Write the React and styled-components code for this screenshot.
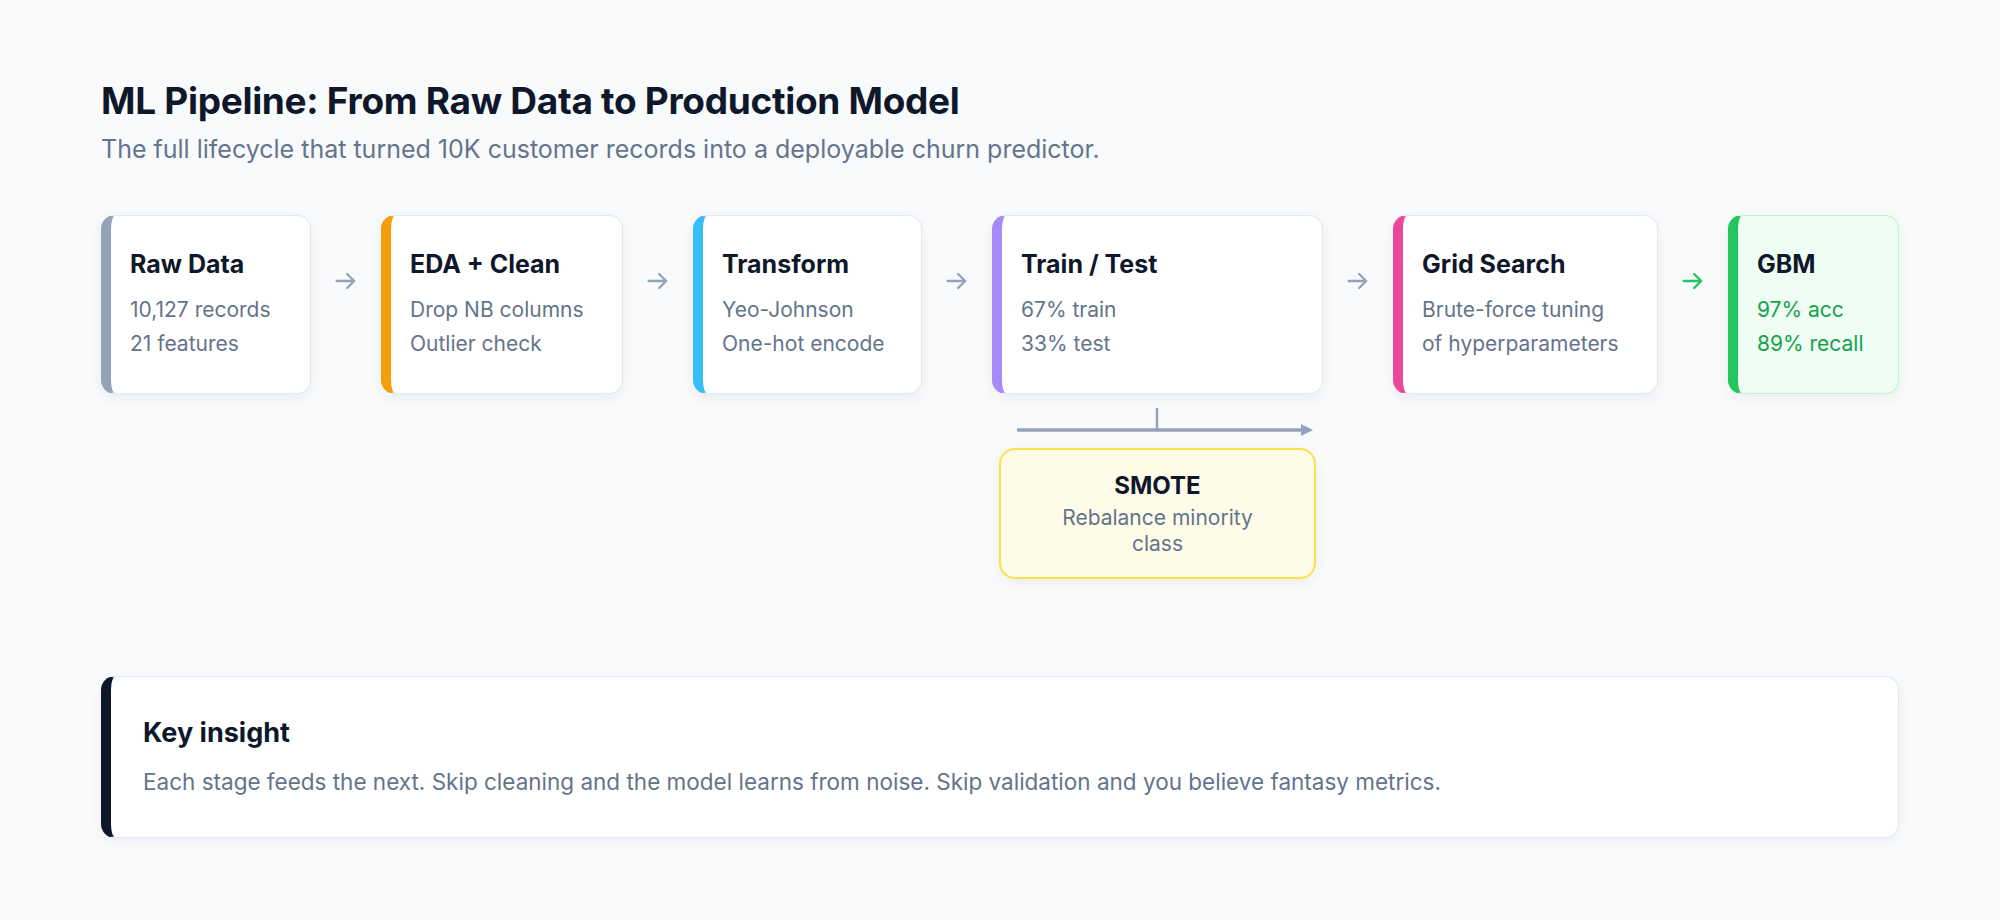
import React from "react";
import styled, { createGlobalStyle } from "styled-components";

const Global = createGlobalStyle`
  html, body { margin: 0; background: #f8fafc; }
  body { font-family: Inter, "Noto Sans", sans-serif; color: #0f172a; }
`;

const Page = styled.div`
  padding: 78px 101px 60px;
  box-sizing: border-box;
  width: 2000px;
`;
const Title = styled.h1`
  margin: 0;
  font-size: 37px;
  line-height: 46px;
  font-weight: 700;
  color: #0f172a;
  letter-spacing: -0.3px;
`;
const Subtitle = styled.p`
  margin: 8px 0 0;
  font-size: 25px;
  line-height: 34px;
  color: #64748b;
`;
const Flow = styled.div`
  display: flex;
  align-items: flex-start;
  margin-top: 49px;
`;
const Column = styled.div`
  display: flex;
  flex-direction: column;
  align-items: stretch;
`;
const Card = styled.div`
  box-sizing: border-box;
  height: 179px;
  width: ${(p) => p.$w}px;
  background: ${(p) => (p.$final ? "#f0fdf4" : "#fff")};
  border: 1.5px solid ${(p) => (p.$final ? "#bbf7d0" : "#e2e8f0")};
  border-left: 10px solid ${(p) => p.$accent};
  border-radius: 14px;
  box-shadow: 0 4px 14px rgba(15, 23, 42, 0.06);
  padding: 33px 16px 0 19px;
`;
const CardTitle = styled.div`
  font-size: 25px;
  line-height: 30px;
  font-weight: 700;
  color: #0f172a;
  margin-bottom: 14px;
`;
const CardLine = styled.div`
  font-size: 21px;
  line-height: 34px;
  color: ${(p) => (p.$final ? "#16a34a" : "#64748b")};
  white-space: nowrap;
`;
const Arrow = styled.div`
  width: 70px;
  display: flex;
  justify-content: center;
  margin-top: 52px;
`;
const Branch = styled.div`
  display: flex;
  flex-direction: column;
  align-items: center;
  padding: 0 7px;
`;
const SmoteBox = styled.div`
  box-sizing: border-box;
  width: 317px;
  height: 131px;
  margin-top: 12px;
  background: #fefce8;
  border: 2px solid #fde047;
  border-radius: 16px;
  box-shadow: 0 4px 14px rgba(15, 23, 42, 0.05);
  display: flex;
  flex-direction: column;
  align-items: center;
  justify-content: center;
  text-align: center;
  padding: 0 40px;
`;
const SmoteTitle = styled.div`
  font-size: 24px;
  line-height: 30px;
  font-weight: 700;
  margin-bottom: 4px;
`;
const SmoteText = styled.div`
  font-size: 21px;
  line-height: 26px;
  color: #64748b;
`;
const Insight = styled.div`
  margin-top: 97px;
  box-sizing: border-box;
  height: 162px;
  background: #fff;
  border: 1.5px solid #e2e8f0;
  border-left: 10px solid #0f172a;
  border-radius: 14px;
  box-shadow: 0 4px 14px rgba(15, 23, 42, 0.05);
  padding: 40px 32px;
`;
const InsightTitle = styled.div`
  font-size: 27px;
  line-height: 32px;
  font-weight: 700;
  margin-bottom: 18px;
`;
const InsightText = styled.div`
  font-size: 22.5px;
  line-height: 30px;
  color: #64748b;
`;

const ArrowIcon = ({ color }) => (
  <svg width="28" height="28" viewBox="0 0 24 24" fill="none" stroke={color} strokeWidth="2" strokeLinecap="round" strokeLinejoin="round">
    <path d="M4 12h15M13 6l6 6-6 6" />
  </svg>
);

const steps = [
  { t: "Raw Data", l: ["10,127 records", "21 features"], c: "#94a3b8", w: 210 },
  { t: "EDA + Clean", l: ["Drop NB columns", "Outlier check"], c: "#f59e0b", w: 242 },
  { t: "Transform", l: ["Yeo-Johnson", "One-hot encode"], c: "#38bdf8", w: 229 },
  { t: "Train / Test", l: ["67% train", "33% test"], c: "#a78bfa", w: 331, branch: true },
  { t: "Grid Search", l: ["Brute-force tuning", "of hyperparameters"], c: "#ec4899", w: 265 },
  { t: "GBM", l: ["97% acc", "89% recall"], c: "#22c55e", w: 171, final: true },
];

export default function App() {
  return (
    <Page>
      <Global />
      <Title>ML Pipeline: From Raw Data to Production Model</Title>
      <Subtitle>The full lifecycle that turned 10K customer records into a deployable churn predictor.</Subtitle>
      <Flow>
        {steps.map((s, i) => (
          <React.Fragment key={s.t}>
            {i > 0 && (
              <Arrow>
                <ArrowIcon color={s.final ? "#22c55e" : "#94a3b8"} />
              </Arrow>
            )}
            <Column>
              <Card $w={s.w} $accent={s.c} $final={s.final}>
                <CardTitle>{s.t}</CardTitle>
                {s.l.map((x) => (
                  <CardLine key={x} $final={s.final}>{x}</CardLine>
                ))}
              </Card>
              {s.branch && (
                <Branch>
                  <svg width="317" height="42" viewBox="0 0 317 42">
                    <line x1="158" y1="14" x2="158" y2="35" stroke="#94a3b8" strokeWidth="2.5" />
                    <line x1="18" y1="36" x2="305" y2="36" stroke="#94a3b8" strokeWidth="3.5" />
                    <path d="M302 30 L314 36 L302 42 Z" fill="#94a3b8" />
                  </svg>
                  <SmoteBox>
                    <SmoteTitle>SMOTE</SmoteTitle>
                    <SmoteText>Rebalance minority class</SmoteText>
                  </SmoteBox>
                </Branch>
              )}
            </Column>
          </React.Fragment>
        ))}
      </Flow>
      <Insight>
        <InsightTitle>Key insight</InsightTitle>
        <InsightText>
          Each stage feeds the next. Skip cleaning and the model learns from noise. Skip validation and you believe fantasy metrics.
        </InsightText>
      </Insight>
    </Page>
  );
}
